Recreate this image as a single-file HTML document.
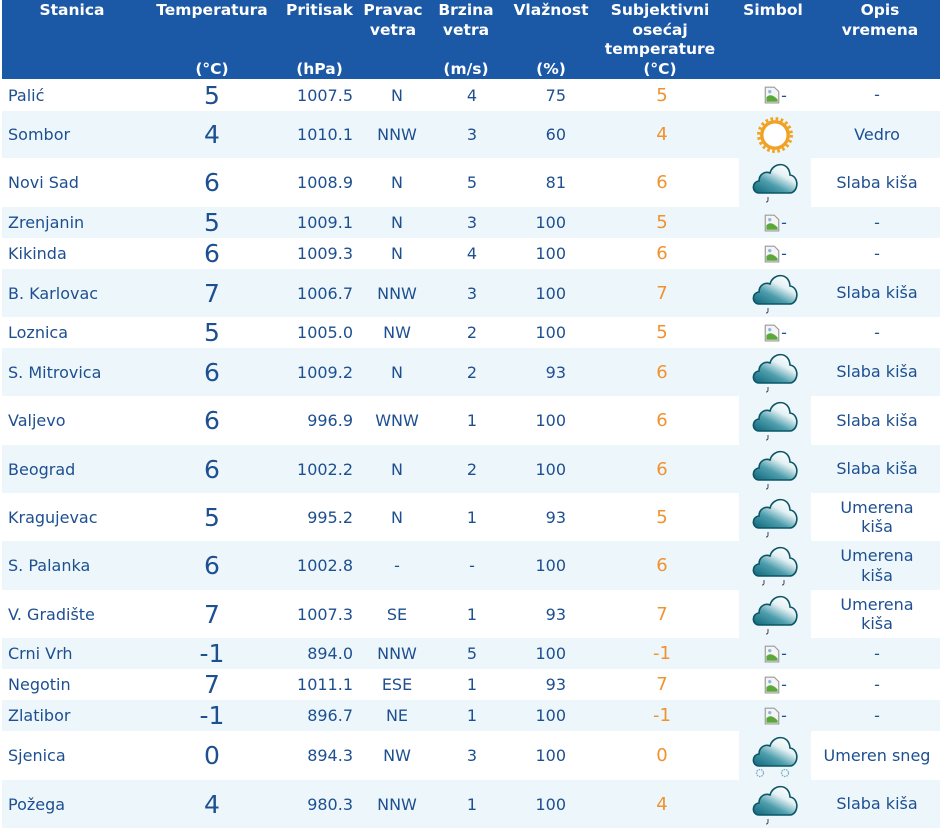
<!DOCTYPE html>
<html><head><meta charset="utf-8">
<style>
*{margin:0;padding:0;box-sizing:border-box}
body{width:940px;height:828px;background:#fff;position:relative;overflow:hidden;font-family:"DejaVu Sans","Liberation Sans",sans-serif;color:#1d4f91;font-size:16px}
.hd{position:absolute;left:2px;top:0;width:938px;height:79px;background:#1b58a6;color:#fff;font-weight:bold;font-size:15.5px}
.hd div{position:absolute;text-align:center;line-height:19.5px;top:1px}
.r{position:absolute;left:2px;width:938px}
.b{background:#edf7fb}
.r>span{position:absolute;top:0;height:100%;display:flex;align-items:center;white-space:nowrap}
.n{left:6px}
.t{left:170px;width:80px;justify-content:center;font-size:25px}
.p{left:255px;width:96px;justify-content:flex-end}
.d{left:362px;width:66px;justify-content:center}
.s{left:438px;width:64px;justify-content:center}
.h{left:496px;width:68px;justify-content:flex-end}
.o{left:620px;width:80px;justify-content:center;color:#f0922e;font-size:18px}
.i{left:737px;width:72px;justify-content:center;background:#edf7fb}
.i.top{align-items:flex-start}
.x{left:812px;width:126px;justify-content:center;text-align:center;line-height:19.5px}
</style></head><body>
<svg width="0" height="0" style="position:absolute"><defs>
<linearGradient id="g" x1="0" y1="1" x2="0.8" y2="0"><stop offset="0" stop-color="#0b6577"/><stop offset="0.4" stop-color="#4f9fae"/><stop offset="0.7" stop-color="#e4f1f3"/><stop offset="1" stop-color="#fff"/></linearGradient>
<symbol id="cloud" viewBox="0 0 48 36"><path d="M8 33 C1 33 0 22 8 21 C8 14 14 11 19 13 C22 2 38 1 39 15 C47 16 48 28 42 32 C41 33 40 33 38 33 Z" fill="url(#g)" stroke="#0c5566" stroke-width="1.6"/></symbol>
<symbol id="bi" viewBox="0 0 16 16"><path d="M2 1h8l4 4v10H2z" fill="#f4f4f4" stroke="#999" stroke-width="1"/><path d="M3 10 C6 7 9 8 13 12 V14 H3z" fill="#5aa83a"/><circle cx="6" cy="5" r="1.5" fill="#8fb8e0"/></symbol>
</defs></svg>

<div class="hd">
<div style="left:25px;width:90px">Stanica</div>
<div style="left:150px;width:120px">Temperatura<br><br><br>(°C)</div>
<div style="left:275px;width:85px">Pritisak<br><br><br>(hPa)</div>
<div style="left:355px;width:72px">Pravac<br>vetra</div>
<div style="left:428px;width:72px">Brzina<br>vetra<br><br>(m/s)</div>
<div style="left:503px;width:92px">Vlažnost<br><br><br>(%)</div>
<div style="left:598px;width:120px">Subjektivni<br>osećaj<br>temperature<br>(°C)</div>
<div style="left:732px;width:78px">Simbol</div>
<div style="left:826px;width:104px">Opis<br>vremena</div>
</div>

<div class="r" style="top:79px;height:32px"><span class="n">Palić</span><span class="t">5</span><span class="p">1007.5</span><span class="d">N</span><span class="s">4</span><span class="h">75</span><span class="o">5</span><span class="i" style="background:none"><svg width="18" height="18"><use href="#bi"/></svg>-</span><span class="x">-</span></div>
<div class="r b" style="top:111px;height:47px"><span class="n">Sombor</span><span class="t">4</span><span class="p">1010.1</span><span class="d">NNW</span><span class="s">3</span><span class="h">60</span><span class="o">4</span><span class="i"><svg width="38" height="38" viewBox="0 0 36 36"><circle cx="18" cy="18" r="15.5" fill="none" stroke="#f3a31c" stroke-width="3" stroke-dasharray="2.5 2.4"/><circle cx="18" cy="18" r="12.5" fill="#fff" stroke="#f0a126" stroke-width="3.2"/></svg></span><span class="x">Vedro</span></div>
<div class="r" style="top:158px;height:49px"><span class="n">Novi Sad</span><span class="t">6</span><span class="p">1008.9</span><span class="d">N</span><span class="s">5</span><span class="h">81</span><span class="o">6</span><span class="i top"><svg width="48" height="46" viewBox="0 0 48 46" style="margin-top:2px"><use href="#cloud" width="48" height="36"/><path d="M17 37 v3 q0 2-2 2" stroke="#445" fill="none"/></svg></span><span class="x">Slaba kiša</span></div>
<div class="r b" style="top:207px;height:31px"><span class="n">Zrenjanin</span><span class="t">5</span><span class="p">1009.1</span><span class="d">N</span><span class="s">3</span><span class="h">100</span><span class="o">5</span><span class="i" style="background:none"><svg width="18" height="18"><use href="#bi"/></svg>-</span><span class="x">-</span></div>
<div class="r" style="top:238px;height:31px"><span class="n">Kikinda</span><span class="t">6</span><span class="p">1009.3</span><span class="d">N</span><span class="s">4</span><span class="h">100</span><span class="o">6</span><span class="i" style="background:none"><svg width="18" height="18"><use href="#bi"/></svg>-</span><span class="x">-</span></div>
<div class="r b" style="top:269px;height:48px"><span class="n">B. Karlovac</span><span class="t">7</span><span class="p">1006.7</span><span class="d">NNW</span><span class="s">3</span><span class="h">100</span><span class="o">7</span><span class="i top"><svg width="48" height="46" viewBox="0 0 48 46" style="margin-top:2px"><use href="#cloud" width="48" height="36"/><path d="M17 37 v3 q0 2-2 2" stroke="#445" fill="none"/></svg></span><span class="x">Slaba kiša</span></div>
<div class="r" style="top:317px;height:31px"><span class="n">Loznica</span><span class="t">5</span><span class="p">1005.0</span><span class="d">NW</span><span class="s">2</span><span class="h">100</span><span class="o">5</span><span class="i" style="background:none"><svg width="18" height="18"><use href="#bi"/></svg>-</span><span class="x">-</span></div>
<div class="r b" style="top:348px;height:48px"><span class="n">S. Mitrovica</span><span class="t">6</span><span class="p">1009.2</span><span class="d">N</span><span class="s">2</span><span class="h">93</span><span class="o">6</span><span class="i top"><svg width="48" height="46" viewBox="0 0 48 46" style="margin-top:2px"><use href="#cloud" width="48" height="36"/><path d="M17 37 v3 q0 2-2 2" stroke="#445" fill="none"/></svg></span><span class="x">Slaba kiša</span></div>
<div class="r" style="top:396px;height:49px"><span class="n">Valjevo</span><span class="t">6</span><span class="p">996.9</span><span class="d">WNW</span><span class="s">1</span><span class="h">100</span><span class="o">6</span><span class="i top"><svg width="48" height="46" viewBox="0 0 48 46" style="margin-top:2px"><use href="#cloud" width="48" height="36"/><path d="M17 37 v3 q0 2-2 2" stroke="#445" fill="none"/></svg></span><span class="x">Slaba kiša</span></div>
<div class="r b" style="top:445px;height:48px"><span class="n">Beograd</span><span class="t">6</span><span class="p">1002.2</span><span class="d">N</span><span class="s">2</span><span class="h">100</span><span class="o">6</span><span class="i top"><svg width="48" height="46" viewBox="0 0 48 46" style="margin-top:2px"><use href="#cloud" width="48" height="36"/><path d="M17 37 v3 q0 2-2 2" stroke="#445" fill="none"/></svg></span><span class="x">Slaba kiša</span></div>
<div class="r" style="top:493px;height:48px"><span class="n">Kragujevac</span><span class="t">5</span><span class="p">995.2</span><span class="d">N</span><span class="s">1</span><span class="h">93</span><span class="o">5</span><span class="i top"><svg width="48" height="46" viewBox="0 0 48 46" style="margin-top:2px"><use href="#cloud" width="48" height="36"/><path d="M17 37 v3 q0 2-2 2" stroke="#445" fill="none"/></svg></span><span class="x">Umerena<br>kiša</span></div>
<div class="r b" style="top:541px;height:49px"><span class="n">S. Palanka</span><span class="t">6</span><span class="p">1002.8</span><span class="d">-</span><span class="s">-</span><span class="h">100</span><span class="o">6</span><span class="i top"><svg width="48" height="46" viewBox="0 0 48 46" style="margin-top:2px"><use href="#cloud" width="48" height="36"/><path d="M13 37 v3 q0 2-2 2 M33 37 v3 q0 2-2 2" stroke="#445" fill="none"/></svg></span><span class="x">Umerena<br>kiša</span></div>
<div class="r" style="top:590px;height:48px"><span class="n">V. Gradište</span><span class="t">7</span><span class="p">1007.3</span><span class="d">SE</span><span class="s">1</span><span class="h">93</span><span class="o">7</span><span class="i top"><svg width="48" height="46" viewBox="0 0 48 46" style="margin-top:2px"><use href="#cloud" width="48" height="36"/><path d="M17 37 v3 q0 2-2 2" stroke="#445" fill="none"/></svg></span><span class="x">Umerena<br>kiša</span></div>
<div class="r b" style="top:638px;height:31px"><span class="n">Crni Vrh</span><span class="t">-1</span><span class="p">894.0</span><span class="d">NNW</span><span class="s">5</span><span class="h">100</span><span class="o">-1</span><span class="i" style="background:none"><svg width="18" height="18"><use href="#bi"/></svg>-</span><span class="x">-</span></div>
<div class="r" style="top:669px;height:31px"><span class="n">Negotin</span><span class="t">7</span><span class="p">1011.1</span><span class="d">ESE</span><span class="s">1</span><span class="h">93</span><span class="o">7</span><span class="i" style="background:none"><svg width="18" height="18"><use href="#bi"/></svg>-</span><span class="x">-</span></div>
<div class="r b" style="top:700px;height:31px"><span class="n">Zlatibor</span><span class="t">-1</span><span class="p">896.7</span><span class="d">NE</span><span class="s">1</span><span class="h">100</span><span class="o">-1</span><span class="i" style="background:none"><svg width="18" height="18"><use href="#bi"/></svg>-</span><span class="x">-</span></div>
<div class="r" style="top:731px;height:49px"><span class="n">Sjenica</span><span class="t">0</span><span class="p">894.3</span><span class="d">NW</span><span class="s">3</span><span class="h">100</span><span class="o">0</span><span class="i top"><svg width="48" height="46" viewBox="0 0 48 46" style="margin-top:2px"><use href="#cloud" width="48" height="36"/><circle cx="9" cy="40" r="3.5" fill="none" stroke="#7ab" stroke-width="1.3" stroke-dasharray="1.5 1"/><circle cx="34" cy="40" r="3.5" fill="none" stroke="#7ab" stroke-width="1.3" stroke-dasharray="1.5 1"/></svg></span><span class="x">Umeren sneg</span></div>
<div class="r b" style="top:780px;height:48px"><span class="n">Požega</span><span class="t">4</span><span class="p">980.3</span><span class="d">NNW</span><span class="s">1</span><span class="h">100</span><span class="o">4</span><span class="i top"><svg width="48" height="46" viewBox="0 0 48 46" style="margin-top:2px"><use href="#cloud" width="48" height="36"/><path d="M17 37 v3 q0 2-2 2" stroke="#445" fill="none"/></svg></span><span class="x">Slaba kiša</span></div>
</body></html>
